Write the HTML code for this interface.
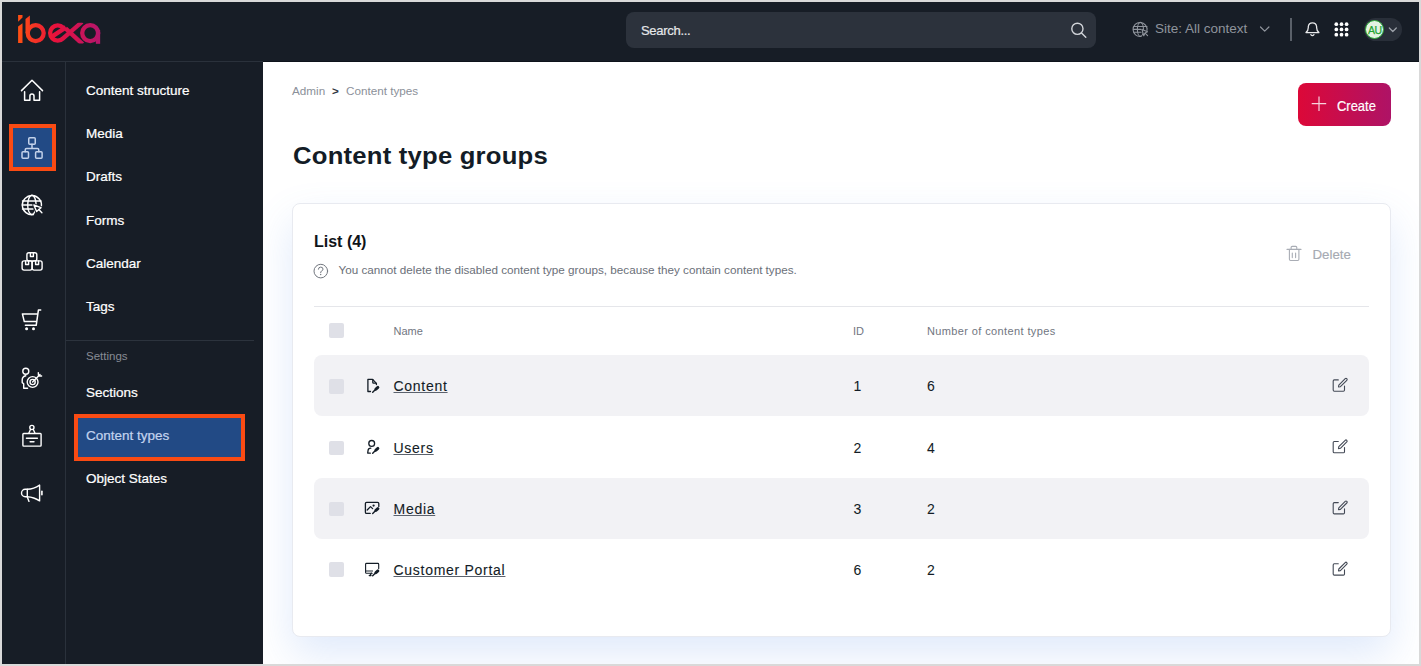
<!DOCTYPE html>
<html><head><meta charset="utf-8">
<style>
*{box-sizing:border-box;margin:0;padding:0}
html,body{width:1421px;height:666px;overflow:hidden;background:#d9d9d9;font-family:"Liberation Sans",sans-serif}
.b{position:absolute}
.t{position:absolute;white-space:nowrap;line-height:1}
.mi{font-size:13.5px;color:#fff;left:86px;-webkit-text-stroke:0.22px currentColor}
.row{position:absolute;left:314px;width:1055px;height:61px;border-radius:8px}
.row.g{background:#f2f2f5}
.cb{position:absolute;width:14.5px;height:14.5px;border-radius:2px;background:#dfe0e7}
.nm{position:absolute;left:393.5px;font-size:14px;letter-spacing:0.72px;color:#131c26;-webkit-text-stroke:0.1px #131c26;text-decoration:underline;text-decoration-color:#5b626d;text-underline-offset:1.2px;text-decoration-thickness:1.3px;white-space:nowrap;line-height:1}
.num{position:absolute;font-size:14px;color:#131c26;-webkit-text-stroke:0.05px #131c26;line-height:1;white-space:nowrap}
.th{position:absolute;font-size:11px;color:#71767f;line-height:1;white-space:nowrap;top:326px}
</style></head><body>
<!-- frame -->
<div class="b" style="left:2px;top:2px;width:1417px;height:662px;background:#171d26"></div>
<!-- header bottom line -->
<div class="b" style="left:2px;top:61px;width:261px;height:1px;background:#2a313b"></div>
<div class="b" style="left:263px;top:61px;width:1156px;height:1px;background:#0e131b"></div>
<!-- rail border -->
<div class="b" style="left:65px;top:62px;width:1px;height:602px;background:#2a313b"></div>
<!-- main -->
<div class="b" style="left:263px;top:62px;width:1156px;height:602px;background:#fff;overflow:hidden">
  <div class="b" style="left:28.8px;top:141px;width:1099px;height:433.6px;border-radius:8px;background:#fff;border:1px solid #e8eaf0;box-shadow:0 18px 40px rgba(90,145,235,0.19)"></div>
</div>

<!-- search -->
<div class="b" style="left:626px;top:12px;width:470px;height:36px;border-radius:8px;background:#2c323c"></div>
<div class="t" style="left:641px;top:23.5px;font-size:13px;letter-spacing:-0.3px;color:#e6e7ea;-webkit-text-stroke:0.2px #e6e7ea">Search...</div>
<div class="t" style="left:1155px;top:21.5px;font-size:13.5px;color:#8f949c">Site: All context</div>
<div class="b" style="left:1290px;top:18px;width:2px;height:23px;background:#5a6069"></div>
<div class="b" style="left:1364px;top:18px;width:38px;height:23px;border-radius:12px;background:#292f39"></div>
<div class="b" style="left:1365px;top:20px;width:19px;height:19px;border-radius:50%;background:#e3f3e3;border:1.5px solid #2fab3c"></div>
<div class="t" style="left:1368px;top:24.8px;font-size:10.5px;color:#24a332;letter-spacing:-0.4px;-webkit-text-stroke:0.25px #24a332">AU</div>

<!-- logo -->
<svg class="b" style="left:0;top:0" width="120" height="60" viewBox="0 0 120 60">
  <defs><linearGradient id="lg" x1="18" y1="0" x2="100" y2="0" gradientUnits="userSpaceOnUse">
    <stop offset="0" stop-color="#ff5012"/><stop offset="0.45" stop-color="#e8113c"/><stop offset="1" stop-color="#b5166c"/></linearGradient><clipPath id="xc"><rect x="40" y="22.8" width="60" height="20.6"/></clipPath></defs>
  <g fill="url(#lg)" stroke="none">
    <polygon points="18.1,15 22.5,15 22.5,17.6 18.1,21.8"/>
    <polygon points="18.1,26.4 22.5,23.2 22.5,43.1 18.1,43.1"/>
    <polygon points="25.5,19.1 29.9,15.4 29.9,33 25.5,33"/>
  </g>
  <g fill="none" stroke="url(#lg)" stroke-width="4.3">
    <circle cx="35.7" cy="33.1" r="8"/>
    <path d="M63.1 27.6 A7.6 7.6 0 1 0 63.1 38.4 L82 22" clip-path="url(#xc)"/>
    <path d="M52.3 36.4 L65.8 27.4"/>
    <path d="M65.5 28.4 L82.6 44.2" clip-path="url(#xc)"/>
    <circle cx="90.2" cy="33.1" r="8"/>
    <path d="M98 30 V43.8"/>
  </g>
</svg>

<!-- rail selected -->
<div class="b" style="left:9px;top:124px;width:47px;height:47px;border:4px solid #fa4b13;background:#224a85"></div>

<!-- submenu -->
<div class="t mi" style="top:83.5px">Content structure</div>
<div class="t mi" style="top:127.3px">Media</div>
<div class="t mi" style="top:170.2px">Drafts</div>
<div class="t mi" style="top:213.5px">Forms</div>
<div class="t mi" style="top:256.5px">Calendar</div>
<div class="t mi" style="top:299.5px">Tags</div>
<div class="b" style="left:66px;top:340px;width:188px;height:1px;background:#2c333d"></div>
<div class="t" style="left:86px;top:351px;font-size:11.5px;color:#878c95">Settings</div>
<div class="t mi" style="top:386.2px">Sections</div>
<div class="b" style="left:74px;top:414px;width:171px;height:47px;border:4px solid #fa4b13;background:#224a85"></div>
<div class="t mi" style="top:429.3px;color:#c3d3ee">Content types</div>
<div class="t mi" style="top:472.2px">Object States</div>

<!-- breadcrumbs & title -->
<div class="t" style="left:292px;top:85px;font-size:11.7px;color:#8b9099">Admin</div>
<div class="t" style="left:332px;top:85px;font-size:11.7px;font-weight:bold;color:#2e3540">&gt;</div>
<div class="t" style="left:346px;top:85px;font-size:11.7px;color:#8b9099">Content types</div>
<div class="t" style="left:292.5px;top:144.7px;font-size:23px;font-weight:bold;letter-spacing:0.2px;color:#131c26;transform:scaleX(1.115);transform-origin:0 0">Content type groups</div>

<!-- create button -->
<div class="b" style="left:1298px;top:83px;width:93px;height:43px;border-radius:8px;background:linear-gradient(90deg,#dc0838,#ae1366)"></div>
<div class="t" style="left:1337.3px;top:99.2px;font-size:14px;color:#fff;-webkit-text-stroke:0.2px #fff;transform:scaleX(0.925);transform-origin:0 0">Create</div>

<!-- card content -->
<div class="t" style="left:314px;top:233.8px;font-size:16px;font-weight:bold;color:#0f1419">List (4)</div>
<div class="t" style="left:338.5px;top:264px;font-size:11.7px;color:#6b7079">You cannot delete the disabled content type groups, because they contain content types.</div>
<div class="t" style="left:1312.5px;top:248px;font-size:13.3px;color:#a6aab2;-webkit-text-stroke:0.15px #a6aab2">Delete</div>
<div class="b" style="left:314px;top:306px;width:1055px;height:1px;background:#e5e6ea"></div>

<div class="cb" style="left:328.5px;top:323px;width:15px;height:15px"></div>
<div class="th" style="left:393.5px">Name</div>
<div class="th" style="left:853px">ID</div>
<div class="th" style="left:927px;letter-spacing:0.38px">Number of content types</div>

<div class="row g" style="top:355px"></div>
<div class="row" style="top:416.3px"></div>
<div class="row g" style="top:477.5px"></div>
<div class="row" style="top:538.8px"></div>

<div class="cb" style="left:329px;top:379px"></div>
<div class="cb" style="left:329px;top:440.5px"></div>
<div class="cb" style="left:329px;top:501.5px"></div>
<div class="cb" style="left:329px;top:562.3px"></div>

<div class="nm" style="top:379.3px">Content</div>
<div class="nm" style="top:440.9px">Users</div>
<div class="nm" style="top:502px">Media</div>
<div class="nm" style="top:563.2px">Customer Portal</div>

<div class="num" style="left:853.5px;top:379.3px">1</div>
<div class="num" style="left:853.5px;top:440.9px">2</div>
<div class="num" style="left:853.5px;top:502px">3</div>
<div class="num" style="left:853.5px;top:563.2px">6</div>
<div class="num" style="left:927px;top:379.3px">6</div>
<div class="num" style="left:927px;top:440.9px">4</div>
<div class="num" style="left:927px;top:502px">2</div>
<div class="num" style="left:927px;top:563.2px">2</div>

<!-- icon overlay -->
<svg class="b" style="left:0;top:0;pointer-events:none" width="1421" height="666" viewBox="0 0 1421 666" fill="none" stroke-linecap="round" stroke-linejoin="round">
  <!-- home -->
  <g stroke="#fff" stroke-width="1.5">
    <path d="M21.5 90.6 L32 80.3 L42.5 90.6"/>
    <path d="M24.6 91.8 V100.2 H29.9 V96 A2.05 2.05 0 0 1 34 96 V100.2 H39.6 V91.8"/>
  </g>
  <!-- network (selected) -->
  <g stroke="#c3d2ea" stroke-width="1.5">
    <rect x="28.75" y="137.75" width="6.5" height="6.5" rx="1"/>
    <path d="M32 144.25 V148.6 M25.2 151.75 V150 Q25.2 148.6 26.6 148.6 H37.4 Q38.8 148.6 38.8 150 V151.75"/>
    <rect x="22" y="151.75" width="6.5" height="6.5" rx="1"/>
    <rect x="35.6" y="151.75" width="6.5" height="6.5" rx="1"/>
  </g>
  <!-- globe cursor -->
  <g stroke="#fff" stroke-width="1.4">
    <path d="M41.4 206.5 A9.6 9.6 0 1 0 33.5 214.6"/>
    <ellipse cx="31.9" cy="204.9" rx="4.2" ry="9.6"/>
    <path d="M22.5 201 H41 M22.3 205 H33 M22.5 209 H33"/>
  </g>
  <path d="M33.9 205 L41 207.7 L36.6 211.6 Z" fill="#171d26" stroke="#171d26" stroke-width="3.2"/><path d="M33.9 205 L41 207.7 L36.6 211.6 Z" fill="#171d26" stroke="#fff" stroke-width="1.4"/>
  <path d="M38.8 209.6 L41.9 212.8" stroke="#fff" stroke-width="1.4"/>
  <!-- boxes -->
  <g stroke="#fff" stroke-width="1.4">
    <rect x="26.9" y="252.8" width="9.9" height="8.1" rx="2"/>
    <rect x="22.1" y="260.9" width="10" height="9.2" rx="2"/>
    <rect x="32.1" y="260.9" width="10" height="9.2" rx="2"/>
    <path d="M30.4 253 V256.5 H33.4 V253 M25.6 261 V264.5 H28.6 V261 M35.6 261 V264.5 H38.6 V261"/>
  </g>
  <!-- cart -->
  <g stroke="#fff" stroke-width="1.5">
    <path d="M40.7 310.1 H38.4 L36.2 325.3 H25.4"/>
    <path d="M22.4 313.9 H37.3 M22.4 313.9 L24.3 321.6 H35.8"/>
  </g>
  <circle cx="26.6" cy="328.8" r="1.5" fill="#fff"/>
  <circle cx="33.5" cy="328.8" r="1.5" fill="#fff"/>
  <!-- person target -->
  <g stroke="#fff" stroke-width="1.4">
    <circle cx="25.8" cy="371.3" r="3"/>
    <path d="M25.8 375.8 Q22.2 376.5 22.2 380 V382.6 L23.7 383.8 V388.2 H27.6"/>
    <circle cx="32.6" cy="382" r="5.4"/>
    <circle cx="32.6" cy="382" r="2.6"/>
    <path d="M32.6 382 L40 374.5 M38.3 372.6 L38.5 375.8 L41.6 376"/>
  </g>
  <!-- badge -->
  <g stroke="#fff" stroke-width="1.4">
    <rect x="22.9" y="433.5" width="18.2" height="12.6" rx="0.8"/>
    <circle cx="31.9" cy="427.5" r="2.1"/>
    <path d="M30.6 429.3 L28.9 433 M33.2 429.3 L34.9 433 M26.4 438.2 H37.4 M30.1 441.7 H34"/>
  </g>
  <!-- megaphone -->
  <g stroke="#fff" stroke-width="1.4">
    <path d="M27.2 489.3 Q34 489 39.6 485.1 V500.9 Q34 497 27.2 496.7 H25.2 A3.7 3.7 0 0 1 25.2 489.3 Z"/>
    <path d="M27.3 489.3 V497 L29 501.4"/>
    <path d="M41.9 491.2 V494.8" stroke-width="1.6"/>
  </g>

  <!-- search icon -->
  <g stroke="#d2d5da" stroke-width="1.4">
    <circle cx="1077.4" cy="28.8" r="5.6"/>
    <path d="M1081.5 32.9 L1085.8 37.2"/>
  </g>
  <!-- site globe -->
  <g stroke="#8f949c" stroke-width="1.1">
    <path d="M1147 30.5 A7 7 0 1 0 1141 36.4"/>
    <ellipse cx="1140.4" cy="29.4" rx="3" ry="7"/>
    <path d="M1134 26.5 H1147 M1133.5 29.4 H1141 M1134 32.3 H1141"/>
    <path d="M1142 29.5 L1147.5 31.8 L1145 33 L1143.8 35.8 Z" fill="#171d26"/>
    <path d="M1145.3 33.3 L1147.6 35.6"/>
  </g>
  <path d="M1260.5 27 L1264.7 31.2 L1268.9 27" stroke="#8f949c" stroke-width="1.2"/>
  <!-- bell -->
  <g stroke="#e8e9eb" stroke-width="1.3">
    <path d="M1306 32.6 Q1308.3 30.6 1308.3 27.5 V26.5 A4.2 4.2 0 0 1 1316.6 26.5 V27.5 Q1316.6 30.6 1318.9 32.6 Z"/>
    <path d="M1310.8 34.7 Q1312.4 36.6 1314 34.7"/>
  </g>
  <!-- grid -->
  <g fill="#fff">
    <circle cx="1336.3" cy="24.2" r="1.85"/><circle cx="1341.5" cy="24.2" r="1.85"/><circle cx="1346.6" cy="24.2" r="1.85"/>
    <circle cx="1336.3" cy="29.4" r="1.85"/><circle cx="1341.5" cy="29.4" r="1.85"/><circle cx="1346.6" cy="29.4" r="1.85"/>
    <circle cx="1336.3" cy="34.7" r="1.85"/><circle cx="1341.5" cy="34.7" r="1.85"/><circle cx="1346.6" cy="34.7" r="1.85"/>
  </g>
  <path d="M1389.3 28 L1392.8 31.5 L1396.3 28" stroke="#9ea3ab" stroke-width="1.2"/>

  <!-- create plus -->
  <path d="M1319 96.5 V111 M1311.7 103.7 H1326.2" stroke="#f7d3dc" stroke-width="1.2" stroke-linecap="butt"/>
  <!-- trash -->
  <g stroke="#a9adb5" stroke-width="1.1">
    <path d="M1287 249.4 H1301 M1291.1 249.4 V247.5 Q1291.1 246.4 1292.2 246.4 H1295.7 Q1296.8 246.4 1296.8 247.5 V249.4"/>
    <path d="M1289.4 249.4 V259.3 Q1289.4 260.5 1290.6 260.5 H1297.7 Q1298.9 260.5 1298.9 259.3 V249.4"/>
    <path d="M1292.3 253 V257.6 M1295.6 253 V257.6"/>
  </g>
  <!-- question -->
  <g stroke="#71767e" stroke-width="1">
    <circle cx="320.8" cy="271.1" r="6.8"/>
    <path d="M318.4 269.2 Q318.4 267.1 320.7 267.1 Q323 267.1 323 269.1 Q323 270.6 321.3 271.2 Q320.7 271.5 320.7 272.6"/>
  </g>
  <circle cx="320.7" cy="274.5" r="0.7" fill="#71767e"/>

  <!-- row icons -->
  <g stroke="#131c26" stroke-width="1.3">
    <!-- content doc -->
    <path d="M370.5 391.5 H367.9 V379.4 H372.6 L376.4 383.4 V384.5"/>
    <path d="M372.8 379.6 V382.5 Q372.8 383.2 373.5 383.2 H376"/>
    <g transform="translate(0,0)"><path d="M372.7 392.3 L375.2 389.8" stroke-width="1.4"/><path d="M375.9 389.2 L377.9 387.4" stroke-width="2.9"/></g>
    <!-- users -->
    <g><circle cx="371.7" cy="443.4" r="2.9"/>
    <path d="M370.8 448.2 Q368.2 448.3 368 450.8 L367.7 453.2 H370.3"/>
    <g transform="translate(0,61)"><path d="M372.7 392.3 L375.2 389.8" stroke-width="1.4"/><path d="M375.9 389.2 L377.9 387.4" stroke-width="2.9"/></g></g>
    <!-- media -->
    <g>
    <path d="M370.2 513.4 H366.6 Q365.4 513.4 365.4 512.2 V503.6 Q365.4 502.4 366.6 502.4 H377.6 Q378.8 502.4 378.8 503.6 V506.4"/>
    <path d="M367.2 510 L370.5 506.6 L372.6 508.6"/><circle cx="373.6" cy="505.6" r="0.5" fill="#131c26"/>
    <g transform="translate(0,121.2)"><path d="M372.7 392.3 L375.2 389.8" stroke-width="1.4"/><path d="M375.9 389.2 L377.9 387.4" stroke-width="2.9"/></g></g>
    <!-- monitor -->
    <g>
    <path d="M372.2 573.3 H366.5 Q365.6 573.3 365.6 572.4 V564.3 Q365.6 563.4 366.5 563.4 H377.8 Q378.7 563.4 378.7 564.3 V568.4" stroke-width="1.1"/>
    <path d="M366 571 H372.6" stroke-width="0.95"/>
    <path d="M371.2 573.2 L370.2 575.4 M369.3 575.5 H371"/>
    <g transform="translate(0,183.5)"><path d="M372.7 392.3 L375.2 389.8" stroke-width="1.4"/><path d="M375.9 389.2 L377.9 387.4" stroke-width="2.9"/></g></g>
  </g>
  <!-- edit icons -->
  <g stroke="#434955" stroke-width="1.1">
    <g transform="translate(0,0)"><path d="M1338.3 379.9 H1334.3 Q1333.2 379.9 1333.2 381 V390.1 Q1333.2 391.2 1334.3 391.2 H1343.4 Q1344.5 391.2 1344.5 390.1 V386"/>
    <path d="M1338.8 385.1 L1345.2 378.7 A1.13 1.13 0 0 1 1346.8 380.3 L1340.4 386.7 L1338.5 387 Z"/></g>
    <g transform="translate(0,61.6)"><path d="M1338.3 379.9 H1334.3 Q1333.2 379.9 1333.2 381 V390.1 Q1333.2 391.2 1334.3 391.2 H1343.4 Q1344.5 391.2 1344.5 390.1 V386"/>
    <path d="M1338.8 385.1 L1345.2 378.7 A1.13 1.13 0 0 1 1346.8 380.3 L1340.4 386.7 L1338.5 387 Z"/></g>
    <g transform="translate(0,122.7)"><path d="M1338.3 379.9 H1334.3 Q1333.2 379.9 1333.2 381 V390.1 Q1333.2 391.2 1334.3 391.2 H1343.4 Q1344.5 391.2 1344.5 390.1 V386"/>
    <path d="M1338.8 385.1 L1345.2 378.7 A1.13 1.13 0 0 1 1346.8 380.3 L1340.4 386.7 L1338.5 387 Z"/></g>
    <g transform="translate(0,183.9)"><path d="M1338.3 379.9 H1334.3 Q1333.2 379.9 1333.2 381 V390.1 Q1333.2 391.2 1334.3 391.2 H1343.4 Q1344.5 391.2 1344.5 390.1 V386"/>
    <path d="M1338.8 385.1 L1345.2 378.7 A1.13 1.13 0 0 1 1346.8 380.3 L1340.4 386.7 L1338.5 387 Z"/></g>
  </g>
</svg>
</body></html>
